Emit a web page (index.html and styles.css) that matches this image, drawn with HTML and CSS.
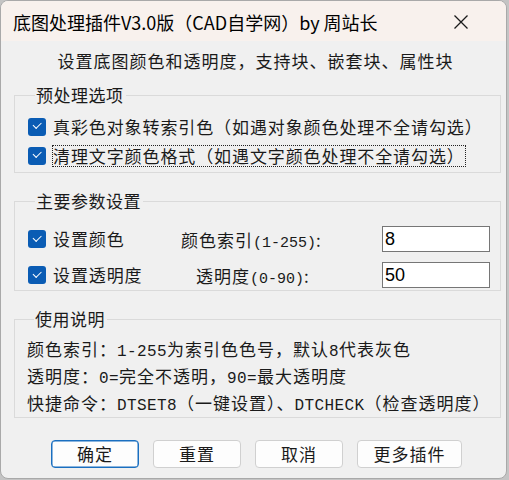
FILE: index.html
```html
<!DOCTYPE html>
<html lang="zh">
<head>
<meta charset="utf-8">
<link rel="stylesheet" href="styles.css">
</head>
<body>
<div class="window">
  <div class="titlebar">
    <span class="title">底图处理插件V3.0版（CAD自学网）by 周站长</span>
    <svg class="close" width="16" height="16" viewBox="0 0 16 16"><path d="M1.5 1.5 L14.5 14.5 M14.5 1.5 L1.5 14.5" stroke="#1a1a1a" stroke-width="1.3" fill="none"/></svg>
  </div>
  <div class="subtitle">设置底图颜色和透明度，支持块、嵌套块、属性块</div>

  <fieldset class="group g1">
    <legend>预处理选项</legend>
    <div class="cbrow"><span class="cb"></span><span class="cbtext">真彩色对象转索引色（如遇对象颜色处理不全请勾选）</span></div>
    <div class="cbrow"><span class="cb"></span><span class="cbtext focus">清理文字颜色格式（如遇文字颜色处理不全请勾选）</span></div>
  </fieldset>

  <fieldset class="group g2">
    <legend>主要参数设置</legend>
    <div class="params">
      <div class="cbrow"><span class="cb"></span><span class="cbtext">设置颜色</span></div>
      <div class="plabel l1">颜色索引<span class="lat">(1-255)</span>:</div>
      <div class="input">8</div>
      <div class="cbrow"><span class="cb"></span><span class="cbtext">设置透明度</span></div>
      <div class="plabel l2">透明度<span class="lat">(0-90)</span>:</div>
      <div class="input">50</div>
    </div>
  </fieldset>

  <fieldset class="group g3">
    <legend>使用说明</legend>
    <div class="line">颜色索引：<span class="lat">1-255</span>为索引色色号，默认<span class="lat">8</span>代表灰色</div>
    <div class="line">透明度：<span class="lat">0=</span>完全不透明，<span class="lat">90=</span>最大透明度</div>
    <div class="line">快捷命令：<span class="lat">DTSET8</span>（一键设置）、<span class="lat">DTCHECK</span>（检查透明度）</div>
  </fieldset>

  <div class="buttons">
    <button class="btn primary">确定</button>
    <button class="btn">重置</button>
    <button class="btn">取消</button>
    <button class="btn wide">更多插件</button>
  </div>
</div>
</body>
</html>
```

FILE: styles.css
```css
html, body {
  margin: 0;
  padding: 0;
  background: #c4c4c4;
}
body {
  width: 509px;
  height: 480px;
  overflow: hidden;
  font-family: "Noto Sans CJK SC", "Noto Sans", sans-serif;
  color: #1a1a1a;
}
.window {
  box-sizing: border-box;
  width: 507px;
  height: 479px;
  background: #f0f0f0;
  border: 1px solid #a9a9a9;
  border-radius: 8px;
  overflow: hidden;
}
.titlebar {
  height: 40px;
  background: #f8f1ed;
  display: flex;
  align-items: center;
  justify-content: space-between;
  padding: 0 37px 0 12px;
}
.title {
  font-size: 18px;
  color: #000;
  line-height: 20px;
  margin-top: 1px;
}
.close {
  display: block;
  margin-top: 1px;
}
.subtitle {
  height: 44px;
  line-height: 40px;
  text-align: center;
  font-size: 17px;
  letter-spacing: 1px;
  padding-left: 4px;
}
.group {
  margin: 0 0 0 13px;
  width: 487px;
  box-sizing: border-box;
  border: 1px solid #dadada;
  padding: 0;
}
.group legend {
  font-size: 17px;
  letter-spacing: 0.5px;
  line-height: 20px;
  padding: 0 2px 0 1px;
  margin-left: 7px;
}
.g1 {
  padding: 7px 0 2px 13px;
}
.g2 {
  margin-top: 18px;
  padding: 15px 0 2px 13px;
}
.g3 {
  margin-top: 18px;
  padding: 6px 0 1px 12px;
}
.cbrow {
  display: flex;
  align-items: center;
  height: 29px;
}
.cb {
  width: 18px;
  height: 18px;
  border-radius: 3px;
  background: #0a5cb4;
  position: relative;
  flex: none;
}
.cb::after {
  content: "";
  position: absolute;
  left: 5px;
  top: 4.5px;
  width: 7px;
  height: 3.5px;
  border-left: 1.2px solid #fff;
  border-bottom: 1.2px solid #fff;
  transform: rotate(-45deg);
}
.cbtext {
  margin-left: 6px;
  font-size: 17px;
  letter-spacing: 0.9px;
  line-height: 20px;
  border: 1px solid transparent;
}
.cbtext.focus {
  border: 1px dotted #222;
}
.params {
  display: grid;
  grid-template-columns: 153px 201px 108px;
  grid-template-rows: 26px 26px;
  row-gap: 10px;
  align-items: center;
}
.params .cbrow {
  height: 26px;
}
.plabel {
  font-size: 17px;
  letter-spacing: 1px;
}
.plabel.l2 {
  padding-left: 15px;
}
.lat {
  font-family: "Liberation Mono", monospace;
  letter-spacing: 0.4px;
  font-size: 16px;
}
.plabel .lat {
  font-size: 15px;
  letter-spacing: 0;
}
.input {
  box-sizing: border-box;
  height: 26px;
  width: 108px;
  background: #fff;
  border: 1px solid #767676;
  font-family: "Liberation Sans", Arial, sans-serif;
  font-size: 18px;
  line-height: 24px;
  padding-left: 2px;
  color: #000;
}
.line {
  height: 27px;
  line-height: 27px;
  font-size: 17px;
  letter-spacing: 1px;
}
.buttons {
  display: flex;
  gap: 14px;
  margin: 22px 0 0 50px;
}
.btn {
  box-sizing: border-box;
  width: 88px;
  height: 28px;
  background: #fdfdfd;
  border: 1px solid #d0d0d0;
  border-radius: 4px;
  font-family: "Noto Sans CJK SC", sans-serif;
  font-size: 17px;
  letter-spacing: 1px;
  color: #1a1a1a;
  padding: 0;
  line-height: 26px;
}
.btn.primary {
  border: 1px solid #1a6fc0;
  box-shadow: inset 0 0 0 0.5px #1a6fc0;
}
.btn.wide {
  width: 105px;
}
```
